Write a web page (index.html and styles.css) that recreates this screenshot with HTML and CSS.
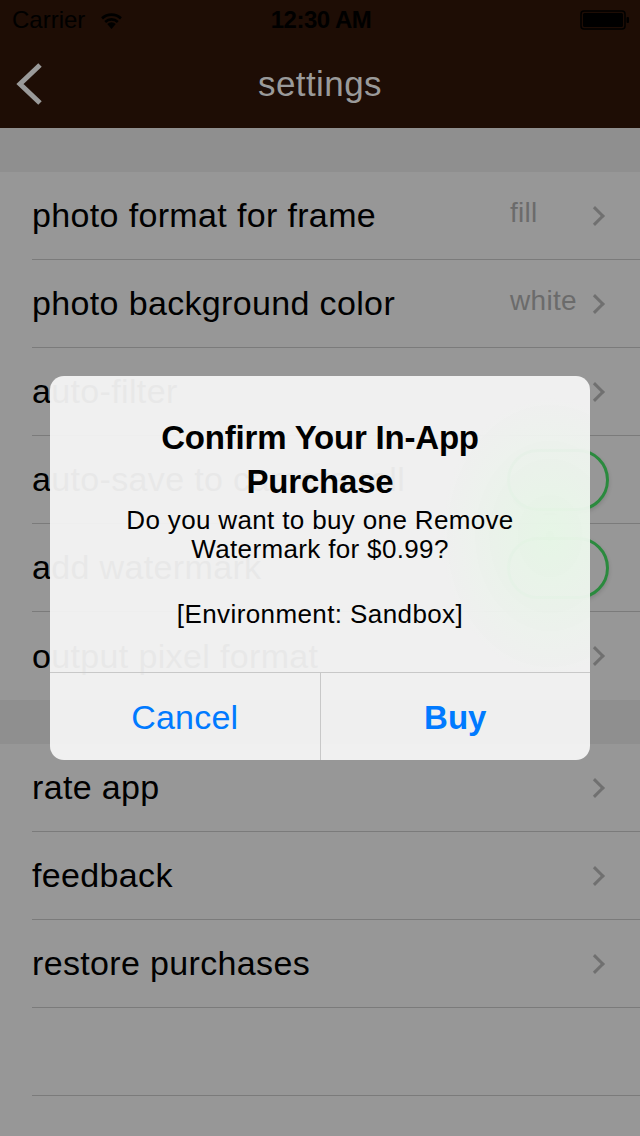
FILE: index.html
```html
<!DOCTYPE html>
<html>
<head>
<meta charset="utf-8">
<link rel="stylesheet" href="styles.css">
</head>
<body>
<div class="screen">
  <div class="statusbar">
    <div class="sb-left"><span>Carrier</span>
      <svg class="wifi" width="25" height="18" viewBox="0 0 22 16"><path d="M11 16 L7.2 11.6 A5.5 5.5 0 0 1 14.8 11.6 Z" fill="#000"/><path d="M4.6 8.8 A9.3 9.3 0 0 1 17.4 8.8 L15.8 10.6 A7 7 0 0 0 6.2 10.6 Z" fill="#000"/><path d="M1.8 5.6 A13.5 13.5 0 0 1 20.2 5.6 L18.6 7.5 A11.2 11.2 0 0 0 3.4 7.5 Z" fill="#000"/></svg>
    </div>
    <div class="sb-time">12:30 AM</div>
    <div class="sb-right">
      <svg width="50" height="20" viewBox="0 0 50 20"><rect x="1" y="1" width="44" height="18" rx="3" fill="none" stroke="#000" stroke-width="1.5"/><rect x="3" y="3" width="40" height="14" rx="1.5" fill="#000"/><rect x="46.5" y="7" width="2.5" height="6" rx="1" fill="#000"/></svg>
    </div>
  </div>
  <div class="navbar">
    <svg class="back" width="30" height="44" viewBox="0 0 30 44"><path d="M26 3 L6 22 L26 41" fill="none" stroke="#9a9a9a" stroke-width="5"/></svg>
    <div class="nav-title">settings</div>
  </div>

  <div class="gap"></div>
  <div class="group">
    <div class="row"><span class="label">photo format for frame</span><span class="value">fill</span><span class="chev"></span></div>
    <div class="row"><span class="label">photo background color</span><span class="value">white</span><span class="chev"></span></div>
    <div class="row"><span class="label">auto-filter</span><span class="chev"></span></div>
    <div class="row"><span class="label">auto-save to camera roll</span><span class="switch"></span></div>
    <div class="row"><span class="label">add watermark</span><span class="switch"></span></div>
    <div class="row last"><span class="label">output pixel format</span><span class="chev"></span></div>
  </div>
  <div class="gap"></div>
  <div class="group">
    <div class="row"><span class="label">rate app</span><span class="chev"></span></div>
    <div class="row"><span class="label">feedback</span><span class="chev"></span></div>
    <div class="row"><span class="label">restore purchases</span><span class="chev"></span></div>
    <div class="row"><span class="label"></span></div>
  </div>

  <div class="alert">
    <div class="alert-body">
      <div class="alert-title">Confirm Your In-App Purchase</div>
      <div class="alert-msg">Do you want to buy one Remove Watermark for $0.99?</div>
      <div class="alert-env">[Environment: Sandbox]</div>
    </div>
    <div class="alert-buttons">
      <div class="btn">Cancel</div>
      <div class="btn bold">Buy</div>
    </div>
  </div>
</div>
</body>
</html>
```
FILE: styles.css
```css
* { box-sizing: border-box; }
html, body { margin: 0; padding: 0; }
body { width: 640px; height: 1136px; overflow: hidden; background: #979797; font-family: "Liberation Sans", Arial, sans-serif; }
.screen { position: relative; width: 640px; height: 1136px; background: #979797; }
.statusbar { height: 40px; background: #1e0d05; display: flex; align-items: center; justify-content: space-between; padding: 0 10px 0 12px; color: #000; font-size: 24px; }
.sb-left { display: flex; align-items: center; gap: 14px; width: 150px; }
.sb-time { font-weight: bold; font-size: 24px; letter-spacing: -0.5px; }
.sb-right { width: 150px; display: flex; justify-content: flex-end; }
.navbar { height: 88px; background: #1e0d05; display: flex; align-items: center; justify-content: center; position: relative; }
.back { position: absolute; left: 14px; top: 22px; }
.nav-title { color: #9a9a9a; font-size: 35px; margin-top: 0; letter-spacing: 0.4px; }
.gap { height: 44px; background: #8f8f8f; }
.group { background: #979797; }
.row { height: 88px; margin-left: 32px; padding-right: 32px; border-bottom: 1px solid #7b7b7b; display: flex; align-items: center; }
.row.last { border-bottom: none; }
.label { flex: 1; font-size: 34px; color: #000; letter-spacing: 0.35px; }
.value { width: 78px; font-size: 28px; color: #6b6b6b; letter-spacing: 0.3px; margin-top: -6px; }
.chev { width: 14px; height: 14px; border-top: 3px solid #707070; border-right: 3px solid #707070; transform: rotate(45deg); margin-right: 6px; }
.switch { width: 102px; height: 62px; border: 3px solid #2b8a3e; border-radius: 31px; margin-right: -1px; box-shadow: 0 2px 4px rgba(0,0,0,0.15); }
.alert { position: absolute; left: 50px; top: 376px; width: 540px; height: 384px; border-radius: 14px; overflow: hidden;
  background: radial-gradient(ellipse 110px 140px at 500px 160px, rgba(222,248,222,0.6), rgba(230,245,230,0) 100%), rgba(244,244,244,0.95); display: flex; flex-direction: column; }
.alert-body { height: 296px; display: flex; flex-direction: column; align-items: center; padding: 40px 30px 0; text-align: center; }
.alert-title { font-weight: bold; font-size: 33px; line-height: 44px; width: 360px; letter-spacing: -0.2px; }
.alert-msg { font-size: 26px; line-height: 29px; width: 440px; letter-spacing: 0.35px; margin-top: 2px; }
.alert-env { font-size: 26px; line-height: 29px; margin-top: 36px; letter-spacing: 0.4px; }
.alert-buttons { flex: 1; display: flex; border-top: 1px solid #c8c8c8; }
.btn { flex: 1; display: flex; align-items: center; justify-content: center; color: #007aff; font-size: 34px; letter-spacing: 0.2px; padding-top: 2px; }
.btn + .btn { border-left: 1px solid #c8c8c8; }
.btn.bold { font-weight: bold; font-size: 33px; letter-spacing: 0; }
```
